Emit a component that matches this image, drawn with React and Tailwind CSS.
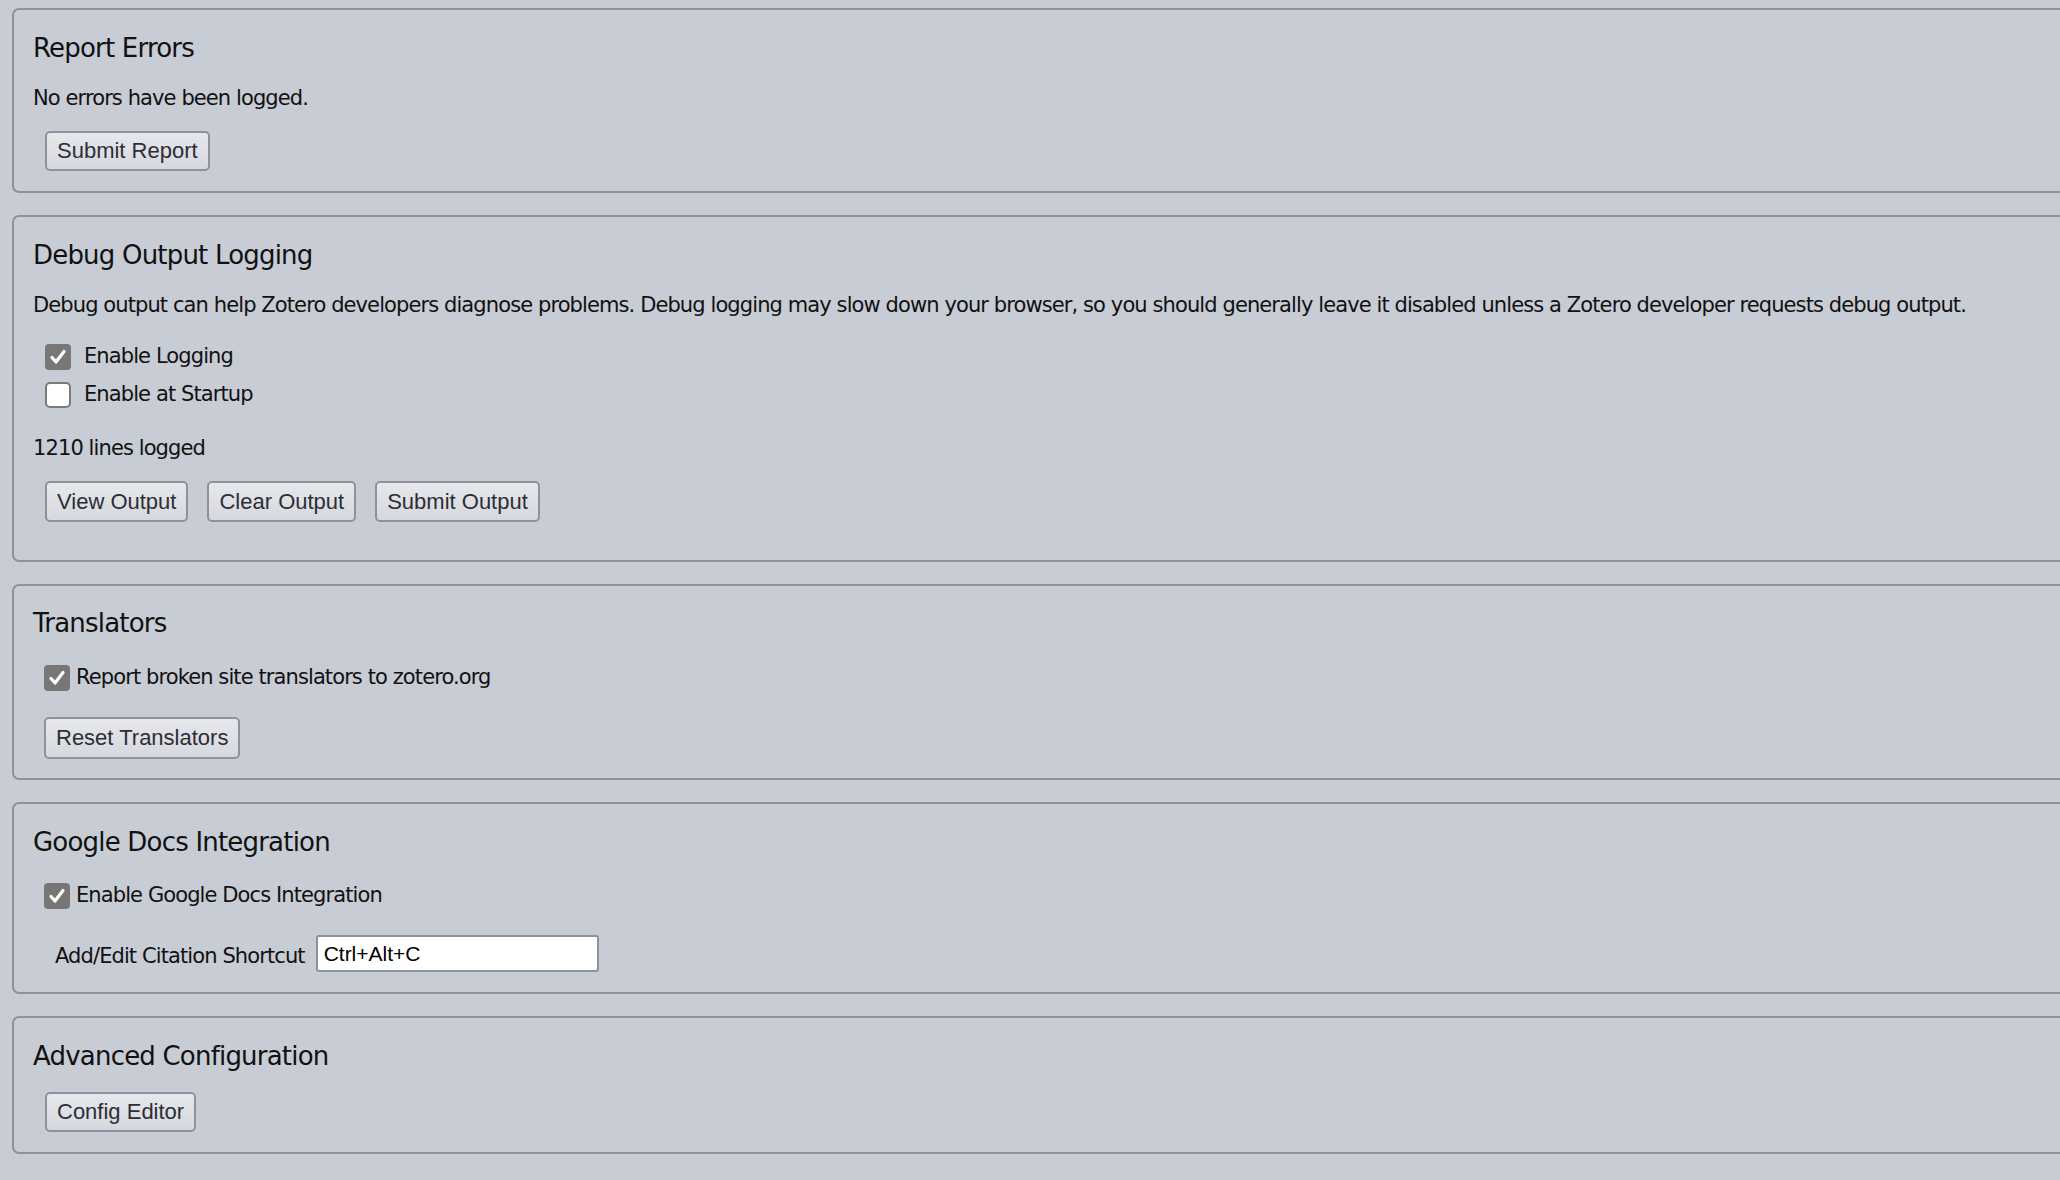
import React from 'react';

const bodyFont = "font-['DejaVu_Sans',sans-serif] text-[21px] tracking-[-0.9px] text-[#111]";

const Title = ({ children }) => (
    <h2 className="h-[32px] leading-[32px] text-[26px] tracking-[-0.8px] text-[#111]">{children}</h2>
);

const Button = ({ children, h = 'h-[40px]' }) => (
    <button
        className={`${h} px-[10px] border-2 border-[#8e929c] rounded-[5px] bg-gradient-to-b from-[#e7e8ec] to-[#d5d8de] font-['Liberation_Sans',Arial,sans-serif] text-[22px] tracking-normal text-[#2c2e36] leading-none`}
    >
        {children}
    </button>
);

const Checkbox = ({ checked }) =>
    checked ? (
        <span className="w-[26px] h-[26px] rounded-[4px] bg-[#777777] flex items-center justify-center shrink-0">
            <svg width="20" height="20" viewBox="0 0 20 20">
                <polyline points="4,10.5 8,15 16,4.5" fill="none" stroke="#fff" strokeWidth="3.2" strokeLinecap="round" strokeLinejoin="round" />
            </svg>
        </span>
    ) : (
        <span className="w-[26px] h-[26px] rounded-[5px] bg-white border-2 border-[#7a7a7a] shrink-0"></span>
    );

const Section = ({ className, children }) => (
    <section className={`border-2 border-r-0 border-[#8e929c] rounded-l-[7px] pl-[19px] ${className}`}>
        {children}
    </section>
);

export default function App() {
    return (
        <div className={`w-full h-[1180px] overflow-hidden bg-[#c8ccd4] pt-[8px] pl-[12px] ${bodyFont}`}>
            {/* Report Errors */}
            <Section className="pt-[22px] pb-[20px]">
                <Title>Report Errors</Title>
                <p className="mt-[20px] h-[28px] leading-[28px]">No errors have been logged.</p>
                <div className="mt-[19px] ml-[12px] flex">
                    <Button>Submit Report</Button>
                </div>
            </Section>

            {/* Debug Output Logging */}
            <Section className="mt-[22px] pt-[22px] pb-[38px]">
                <Title>Debug Output Logging</Title>
                <p className="mt-[20px] h-[28px] leading-[28px] whitespace-nowrap">
                    Debug output can help Zotero developers diagnose problems. Debug logging may slow down your browser, so you should generally leave it disabled unless a Zotero developer requests debug output.
                </p>
                <div className="mt-[19px] ml-[12px]">
                    <label className="h-[38px] flex items-center gap-[13px]">
                        <Checkbox checked />
                        <span>Enable Logging</span>
                    </label>
                    <label className="h-[38px] flex items-center gap-[13px]">
                        <Checkbox />
                        <span>Enable at Startup</span>
                    </label>
                </div>
                <p className="mt-[20px] h-[28px] leading-[28px]">1210 lines logged</p>
                <div className="mt-[19px] ml-[12px] flex gap-[19px]">
                    <Button h="h-[41px]">View Output</Button>
                    <Button h="h-[41px]">Clear Output</Button>
                    <Button h="h-[41px]">Submit Output</Button>
                </div>
            </Section>

            {/* Translators */}
            <Section className="mt-[22px] pt-[21px] pb-[19px]">
                <Title>Translators</Title>
                <label className="mt-[20px] ml-[11px] h-[38px] flex items-center gap-[6px]">
                    <Checkbox checked />
                    <span>Report broken site translators to zotero.org</span>
                </label>
                <div className="mt-[20px] ml-[11px] flex">
                    <Button h="h-[42px]">Reset Translators</Button>
                </div>
            </Section>

            {/* Google Docs Integration */}
            <Section className="mt-[22px] pt-[22px] pb-[20px]">
                <Title>Google Docs Integration</Title>
                <label className="mt-[19px] ml-[11px] h-[38px] flex items-center gap-[6px]">
                    <Checkbox checked />
                    <span>Enable Google Docs Integration</span>
                </label>
                <div className="mt-[20px] ml-[22px] h-[37px] flex items-center gap-[11px]">
                    <span className="pt-[6px]">Add/Edit Citation Shortcut</span>
                    <input
                        type="text"
                        defaultValue="Ctrl+Alt+C"
                        className="w-[283px] h-[37px] bg-white border-2 border-[#8e929c] rounded-[3px] px-[6px] font-['Liberation_Sans',Arial,sans-serif] text-[21px] tracking-normal text-black outline-none"
                    />
                </div>
            </Section>

            {/* Advanced Configuration */}
            <Section className="mt-[22px] pt-[22px] pb-[20px]">
                <Title>Advanced Configuration</Title>
                <div className="mt-[20px] ml-[12px] flex">
                    <Button>Config Editor</Button>
                </div>
            </Section>
        </div>
    );
}
